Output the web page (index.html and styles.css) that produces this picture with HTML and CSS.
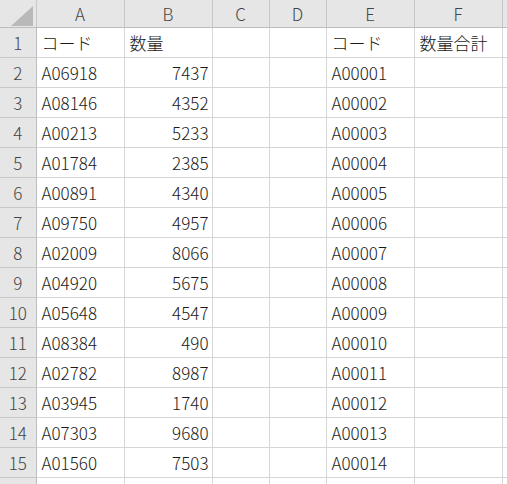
FILE: index.html
```html
<!DOCTYPE html>
<html lang="ja">
<head>
<meta charset="utf-8">
<link rel="stylesheet" href="styles.css">
</head>
<body>
<table class="sheet">
  <colgroup>
    <col class="c-hd"><col class="c-w"><col class="c-w"><col class="c-n"><col class="c-n"><col class="c-w"><col class="c-w"><col class="c-w">
  </colgroup>
  <thead>
    <tr>
      <th class="corner"><svg class="tri" width="22" height="20" viewBox="0 0 22 20"><polygon points="22,0 22,20 0,20" fill="#b9b9b9"/></svg></th>
      <th>A</th><th>B</th><th>C</th><th>D</th><th>E</th><th>F</th><th></th>
    </tr>
  </thead>
  <tbody>
    <tr><th>1</th><td>コード</td><td>数量</td><td></td><td></td><td>コード</td><td>数量合計</td><td></td></tr>
    <tr><th>2</th><td>A06918</td><td class="num">7437</td><td></td><td></td><td>A00001</td><td></td><td></td></tr>
    <tr><th>3</th><td>A08146</td><td class="num">4352</td><td></td><td></td><td>A00002</td><td></td><td></td></tr>
    <tr><th>4</th><td>A00213</td><td class="num">5233</td><td></td><td></td><td>A00003</td><td></td><td></td></tr>
    <tr><th>5</th><td>A01784</td><td class="num">2385</td><td></td><td></td><td>A00004</td><td></td><td></td></tr>
    <tr><th>6</th><td>A00891</td><td class="num">4340</td><td></td><td></td><td>A00005</td><td></td><td></td></tr>
    <tr><th>7</th><td>A09750</td><td class="num">4957</td><td></td><td></td><td>A00006</td><td></td><td></td></tr>
    <tr><th>8</th><td>A02009</td><td class="num">8066</td><td></td><td></td><td>A00007</td><td></td><td></td></tr>
    <tr><th>9</th><td>A04920</td><td class="num">5675</td><td></td><td></td><td>A00008</td><td></td><td></td></tr>
    <tr><th>10</th><td>A05648</td><td class="num">4547</td><td></td><td></td><td>A00009</td><td></td><td></td></tr>
    <tr><th>11</th><td>A08384</td><td class="num">490</td><td></td><td></td><td>A00010</td><td></td><td></td></tr>
    <tr><th>12</th><td>A02782</td><td class="num">8987</td><td></td><td></td><td>A00011</td><td></td><td></td></tr>
    <tr><th>13</th><td>A03945</td><td class="num">1740</td><td></td><td></td><td>A00012</td><td></td><td></td></tr>
    <tr><th>14</th><td>A07303</td><td class="num">9680</td><td></td><td></td><td>A00013</td><td></td><td></td></tr>
    <tr><th>15</th><td>A01560</td><td class="num">7503</td><td></td><td></td><td>A00014</td><td></td><td></td></tr>
    <tr><th></th><td></td><td></td><td></td><td></td><td></td><td></td><td></td></tr>
  </tbody>
</table>
</body>
</html>
```
FILE: styles.css
```css
html, body {
  margin: 0;
  padding: 0;
  background: #ffffff;
  overflow: hidden;
}
.sheet {
  border-collapse: collapse;
  table-layout: fixed;
  width: 590px;
  font-family: "Noto Sans CJK JP", "Noto Sans", sans-serif;
  font-size: 17px;
  font-weight: 300;
  color: #1a1a1a;
}
.c-hd { width: 36px; }
.c-w { width: 88px; }
.c-n { width: 57px; }
.sheet th, .sheet td {
  border: 1px solid #d6d6d6;
  padding: 0 3px 0 5px;
  height: 29px;
  line-height: 29px;
  white-space: nowrap;
  overflow: hidden;
  vertical-align: bottom;
  text-align: left;
}
.sheet thead th {
  height: 27px;
  line-height: 27px;
  background: #e6e6e6;
  color: #444444;
  font-weight: 300;
  text-align: center;
  border-color: #e6e6e6 #c8c8c8 #bdbdbd #c8c8c8;
  border-top: none;
  vertical-align: middle;
  padding: 0;
}
.sheet tbody th {
  background: #e6e6e6;
  color: #444444;
  font-weight: 300;
  text-align: center;
  border-color: #c8c8c8 #bdbdbd #c8c8c8 #e6e6e6;
  border-left: none;
  padding: 0;
}
.sheet thead th.corner {
  position: relative;
  padding: 0;
  border-left: none;
}
.tri {
  position: absolute;
  left: 11px;
  top: 6px;
}
.sheet td.num {
  text-align: right;
}
```
